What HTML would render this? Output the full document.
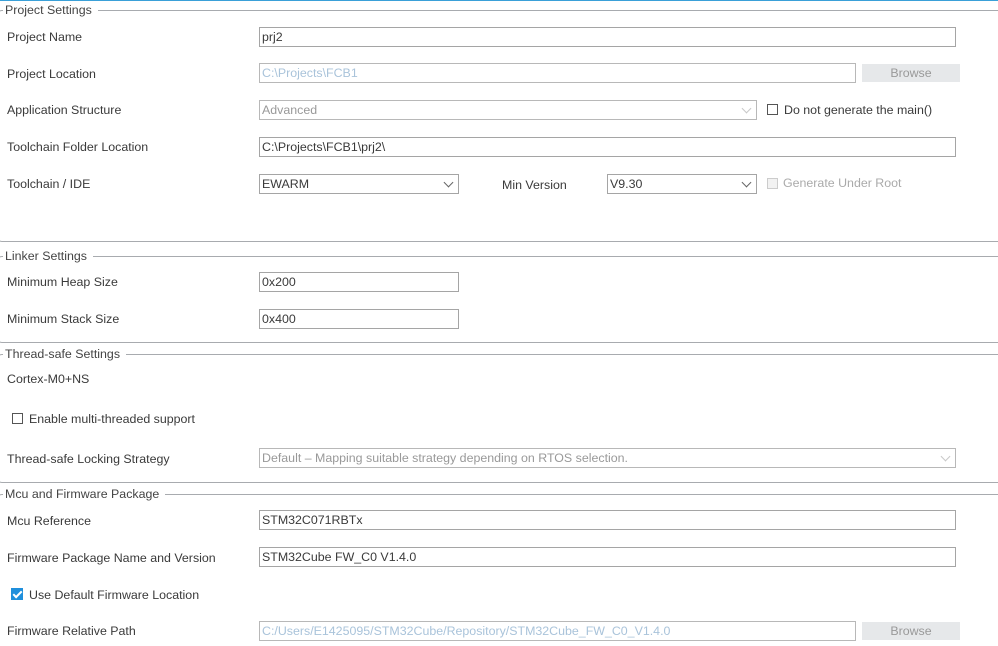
<!DOCTYPE html>
<html style="overflow:hidden;height:646px"><head><style>
body{margin:0;width:998px;height:646px;overflow:hidden;background:#fff;font-family:"Liberation Sans",Arial,sans-serif;font-size:12.4px;color:#3a3a3a;position:relative}
.a{position:absolute}
.fs{position:absolute;left:-3px;width:1001px;border:1px solid #a8abaf;border-right:none;border-radius:5px 0 0 5px;box-sizing:border-box}
.tt{position:absolute;top:-9px;left:5px;background:#fff;padding:0 6px 0 2px;color:#444;line-height:16px}
.lb{position:absolute;left:7px;line-height:16px}
.in{position:absolute;height:20px;border:1px solid #a5a5a5;box-sizing:border-box;padding-left:2px;line-height:18px;background:#fff}
.dis{color:#a9c3da;border-color:#b8b8b8}
.g{color:#999}
.br{position:absolute;width:98px;height:18px;background:#e6e8ea;color:#999;text-align:center;line-height:18px}
.cb{position:absolute;width:11px;height:11px;border:1px solid #555;box-sizing:border-box;background:#fff}
.ch{position:absolute;right:6px;top:4px;width:6px;height:6px;border-right:1px solid #666;border-bottom:1px solid #666;transform:rotate(45deg)}
.ch.l{border-color:#c8c8c8}
</style></head><body>
<div class="a" style="left:0;top:0;width:998px;height:1px;background:#3aa0d8"></div>
<div class="fs" style="top:10px;height:232px"><span class="tt">Project Settings</span></div>
<div class="fs" style="top:256px;height:87px"><span class="tt">Linker Settings</span></div>
<div class="fs" style="top:354px;height:129px"><span class="tt">Thread-safe Settings</span></div>
<div class="fs" style="top:494px;height:152px;border-bottom:none;border-radius:5px 0 0 0"><span class="tt">Mcu and Firmware Package</span></div>

<div class="lb" style="top:29px">Project Name</div>
<div class="in" style="left:259px;top:27px;width:697px">prj2</div>
<div class="lb" style="top:66px">Project Location</div>
<div class="in dis" style="left:259px;top:63px;width:597px">C:\Projects\FCB1</div>
<div class="br" style="left:862px;top:64px">Browse</div>
<div class="lb" style="top:102px">Application Structure</div>
<div class="in g" style="left:259px;top:100px;width:498px;border-color:#b8b8b8">Advanced<span class="ch l"></span></div>
<div class="cb" style="left:767px;top:104px"></div>
<div class="a" style="left:784px;top:102px;line-height:16px">Do not generate the main()</div>
<div class="lb" style="top:139px">Toolchain Folder Location</div>
<div class="in" style="left:259px;top:137px;width:697px">C:\Projects\FCB1\prj2\</div>
<div class="lb" style="top:176px">Toolchain / IDE</div>
<div class="in" style="left:259px;top:174px;width:200px">EWARM<span class="ch"></span></div>
<div class="a" style="left:502px;top:177px;line-height:16px">Min Version</div>
<div class="in" style="left:607px;top:174px;width:150px">V9.30<span class="ch"></span></div>
<div class="cb" style="left:767px;top:178px;border-color:#ccc;background:#f2f2f2"></div>
<div class="a g" style="left:783px;top:175px;line-height:16px;color:#aaa">Generate Under Root</div>

<div class="lb" style="top:274px">Minimum Heap Size</div>
<div class="in" style="left:259px;top:272px;width:200px">0x200</div>
<div class="lb" style="top:311px">Minimum Stack Size</div>
<div class="in" style="left:259px;top:309px;width:200px">0x400</div>

<div class="lb" style="top:371px">Cortex-M0+NS</div>
<div class="cb" style="left:12px;top:413px"></div>
<div class="a" style="left:29px;top:411px;line-height:16px">Enable multi-threaded support</div>
<div class="lb" style="top:451px">Thread-safe Locking Strategy</div>
<div class="in g" style="left:259px;top:448px;width:697px;border-color:#b8b8b8">Default – Mapping suitable strategy depending on RTOS selection.<span class="ch l"></span></div>

<div class="lb" style="top:513px">Mcu Reference</div>
<div class="in" style="left:259px;top:510px;width:697px">STM32C071RBTx</div>
<div class="lb" style="top:550px">Firmware Package Name and Version</div>
<div class="in" style="left:259px;top:547px;width:697px">STM32Cube FW_C0 V1.4.0</div>
<div class="a" style="left:11px;top:588px;width:12px;height:12px;background:#1f8fdc"><div style="position:absolute;left:4px;top:1px;width:3px;height:7px;border-right:2px solid #fff;border-bottom:2px solid #fff;transform:rotate(45deg)"></div></div>
<div class="a" style="left:29px;top:587px;line-height:16px">Use Default Firmware Location</div>
<div class="lb" style="top:623px">Firmware Relative Path</div>
<div class="in dis" style="left:259px;top:621px;width:597px">C:/Users/E1425095/STM32Cube/Repository/STM32Cube_FW_C0_V1.4.0</div>
<div class="br" style="left:862px;top:622px">Browse</div>
</body></html>
